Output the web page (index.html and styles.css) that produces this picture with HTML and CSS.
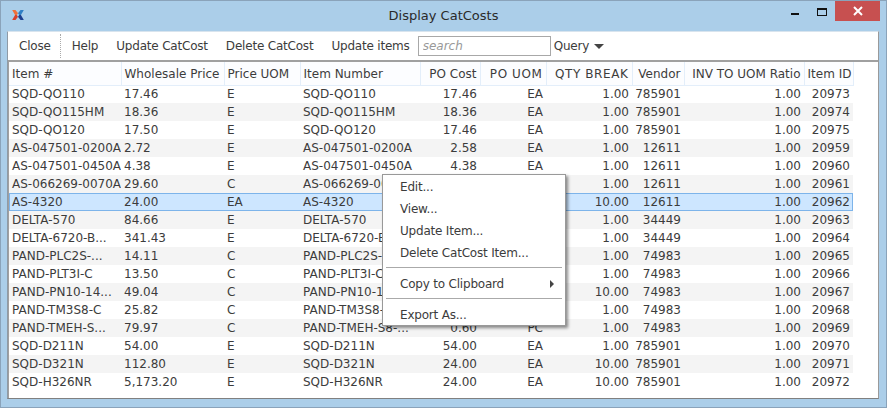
FILE: index.html
```html
<!DOCTYPE html>
<html lang="en">

<head>
    <meta charset="UTF-8">
    <title>Display CatCosts</title>
    <link rel="stylesheet" href="styles.css">
</head>

<body>
    <div class="window">
        <div class="titlebar">
            <svg class="logo" width="12" height="10" viewBox="0 0 14 12">
                <path d="M0 0H4L7 4L5.5 6H3.5Z" fill="#f0703a" />
                <path d="M3.5 6H5.5L7 8L4 12H0Z" fill="#d8402c" />
                <path d="M14 0H10L7 4L8.5 6H10.5Z" fill="#2f7fc4" />
                <path d="M10.5 6H8.5L7 8L10 12H14Z" fill="#1d3f8f" />
            </svg>
            <div class="title">Display CatCosts</div>
            <div class="controls">
                <span class="min"></span>
                <span class="max"></span>
                <span class="close">
                    <svg width="10" height="10" viewBox="0 0 10 10">
                        <path d="M1 1L9 9M9 1L1 9" stroke="#fff" stroke-width="2" />
                    </svg>
                </span>
            </div>
        </div>

        <div class="panel">
            <div class="toolbar">
                <a class="tool">Close</a>
                <span class="sep"></span>
                <a class="tool">Help</a>
                <a class="tool">Update CatCost</a>
                <a class="tool">Delete CatCost</a>
                <a class="tool">Update items</a>
                <input class="search" type="text" placeholder="search">
                <a class="query">Query<span class="caret"></span></a>
            </div>

            <div class="grid">
                <table>
                    <colgroup>
                        <col class="c1"><col class="c2"><col class="c3"><col class="c4"><col class="c5">
                        <col class="c6"><col class="c7"><col class="c8"><col class="c9"><col class="c10">
                    </colgroup>
                    <thead>
                        <tr>
                            <th>Item #</th>
                            <th>Wholesale Price</th>
                            <th>Price UOM</th>
                            <th>Item Number</th>
                            <th class="num">PO Cost</th>
                            <th class="num caps">PO UOM</th>
                            <th class="num caps">QTY BREAK</th>
                            <th class="num">Vendor</th>
                            <th class="num">INV TO UOM Ratio</th>
                            <th class="num">Item ID</th>
                        </tr>
                    </thead>
                    <tbody>
                        <tr><td>SQD-QO110</td><td>17.46</td><td>E</td><td>SQD-QO110</td><td class="num">17.46</td><td class="num">EA</td><td class="num">1.00</td><td class="num">785901</td><td class="num">1.00</td><td class="num">20973</td></tr>
                        <tr><td>SQD-QO115HM</td><td>18.36</td><td>E</td><td>SQD-QO115HM</td><td class="num">18.36</td><td class="num">EA</td><td class="num">1.00</td><td class="num">785901</td><td class="num">1.00</td><td class="num">20974</td></tr>
                        <tr><td>SQD-QO120</td><td>17.50</td><td>E</td><td>SQD-QO120</td><td class="num">17.46</td><td class="num">EA</td><td class="num">1.00</td><td class="num">785901</td><td class="num">1.00</td><td class="num">20975</td></tr>
                        <tr><td>AS-047501-0200A</td><td>2.72</td><td>E</td><td>AS-047501-0200A</td><td class="num">2.58</td><td class="num">EA</td><td class="num">1.00</td><td class="num">12611</td><td class="num">1.00</td><td class="num">20959</td></tr>
                        <tr><td>AS-047501-0450A</td><td>4.38</td><td>E</td><td>AS-047501-0450A</td><td class="num">4.38</td><td class="num">EA</td><td class="num">1.00</td><td class="num">12611</td><td class="num">1.00</td><td class="num">20960</td></tr>
                        <tr><td>AS-066269-0070A</td><td>29.60</td><td>C</td><td>AS-066269-0070A</td><td class="num"></td><td class="num"></td><td class="num">1.00</td><td class="num">12611</td><td class="num">1.00</td><td class="num">20961</td></tr>
                        <tr class="selected"><td>AS-4320</td><td>24.00</td><td>EA</td><td>AS-4320</td><td class="num"></td><td class="num"></td><td class="num">10.00</td><td class="num">12611</td><td class="num">1.00</td><td class="num">20962</td></tr>
                        <tr><td>DELTA-570</td><td>84.66</td><td>E</td><td>DELTA-570</td><td class="num"></td><td class="num"></td><td class="num">1.00</td><td class="num">34449</td><td class="num">1.00</td><td class="num">20963</td></tr>
                        <tr><td>DELTA-6720-B...</td><td>341.43</td><td>E</td><td>DELTA-6720-B...</td><td class="num"></td><td class="num"></td><td class="num">1.00</td><td class="num">34449</td><td class="num">1.00</td><td class="num">20964</td></tr>
                        <tr><td>PAND-PLC2S-...</td><td>14.11</td><td>C</td><td>PAND-PLC2S-...</td><td class="num"></td><td class="num"></td><td class="num">1.00</td><td class="num">74983</td><td class="num">1.00</td><td class="num">20965</td></tr>
                        <tr><td>PAND-PLT3I-C</td><td>13.50</td><td>C</td><td>PAND-PLT3I-C</td><td class="num"></td><td class="num"></td><td class="num">1.00</td><td class="num">74983</td><td class="num">1.00</td><td class="num">20966</td></tr>
                        <tr><td>PAND-PN10-14...</td><td>49.04</td><td>C</td><td>PAND-PN10-14...</td><td class="num"></td><td class="num"></td><td class="num">10.00</td><td class="num">74983</td><td class="num">1.00</td><td class="num">20967</td></tr>
                        <tr><td>PAND-TM3S8-C</td><td>25.82</td><td>C</td><td>PAND-TM3S8-C</td><td class="num"></td><td class="num"></td><td class="num">1.00</td><td class="num">74983</td><td class="num">1.00</td><td class="num">20968</td></tr>
                        <tr><td>PAND-TMEH-S...</td><td>79.97</td><td>C</td><td>PAND-TMEH-S8-...</td><td class="num">0.60</td><td class="num">PC</td><td class="num">1.00</td><td class="num">74983</td><td class="num">1.00</td><td class="num">20969</td></tr>
                        <tr><td>SQD-D211N</td><td>54.00</td><td>E</td><td>SQD-D211N</td><td class="num">54.00</td><td class="num">EA</td><td class="num">1.00</td><td class="num">785901</td><td class="num">1.00</td><td class="num">20970</td></tr>
                        <tr><td>SQD-D321N</td><td>112.80</td><td>E</td><td>SQD-D321N</td><td class="num">24.00</td><td class="num">EA</td><td class="num">10.00</td><td class="num">785901</td><td class="num">1.00</td><td class="num">20971</td></tr>
                        <tr><td>SQD-H326NR</td><td>5,173.20</td><td>E</td><td>SQD-H326NR</td><td class="num">24.00</td><td class="num">EA</td><td class="num">10.00</td><td class="num">785901</td><td class="num">1.00</td><td class="num">20972</td></tr>
                    </tbody>
                </table>
            </div>
        </div>

        <ul class="menu">
            <li>Edit...</li>
            <li>View...</li>
            <li>Update Item...</li>
            <li>Delete CatCost Item...</li>
            <li class="divider"></li>
            <li class="submenu">Copy to Clipboard<span class="arrow"></span></li>
            <li class="divider"></li>
            <li>Export As...</li>
        </ul>
    </div>
</body>

</html>
```

FILE: styles.css
```css
body {
    margin: 0;
    font-family: "DejaVu Sans", sans-serif;
    font-size: 12px;
    color: #3c3c3c;
}

.window {
    position: relative;
    box-sizing: border-box;
    width: 887px;
    height: 408px;
    background-color: #abcee9;
    border: 1px solid #8aa3ba;
    display: flex;
    flex-direction: column;
}

.titlebar {
    height: 30px;
    flex-shrink: 0;
    display: grid;
    grid-template-columns: 1fr auto 1fr;
    align-items: start;
}

.logo {
    margin: 9px 0 0 11px;
}

.title {
    margin-top: 7px;
    font-size: 13px;
    color: #2a2a2a;
}

.controls {
    justify-self: end;
    display: flex;
    margin-right: 6px;
}

.min {
    width: 8px;
    height: 2px;
    margin: 12px 18px 0 0;
    background-color: #111;
}

.max {
    box-sizing: border-box;
    width: 10px;
    height: 8px;
    margin: 7px 8px 0 0;
    border: 1px solid #111;
    border-top-width: 2px;
}

.close {
    width: 45px;
    height: 20px;
    background-color: #c75050;
    display: flex;
    align-items: center;
    justify-content: center;
}

.panel {
    flex: 1;
    margin: 0 7px 8px 6px;
    background-color: #fff;
    border: 1px solid #a0a0a0;
    border-top-color: #d8e4ee;
    border-left-color: #8f9aa5;
    border-right-color: #9a9a9a;
    border-bottom-color: #808080;
    display: flex;
    flex-direction: column;
    min-height: 0;
}

.toolbar {
    height: 28px;
    flex-shrink: 0;
    display: flex;
    align-items: center;
    padding-left: 2px;
    letter-spacing: -0.2px;
}

.tool {
    padding: 0 9px;
    white-space: nowrap;
}

.sep {
    height: 24px;
    margin-right: 2px;
    border-left: 1px dotted #aaa;
}

.search {
    box-sizing: border-box;
    width: 133px;
    height: 20px;
    margin: 0 3px 0 -1px;
    padding: 0 4px;
    border: 1px solid #a8a8a8;
    font-family: inherit;
    font-size: 12px;
}

.search::placeholder {
    color: #999;
    font-style: italic;
}

.query {
    display: flex;
    align-items: center;
}

.caret {
    width: 0;
    height: 0;
    margin-left: 5px;
    border-left: 5px solid transparent;
    border-right: 5px solid transparent;
    border-top: 5px solid #444;
}

.grid {
    flex: 1;
    border-top: 2px solid #a0a0a0;
    border-left: 1px solid #a0a0a0;
    overflow: hidden;
}

table {
    border-collapse: collapse;
    table-layout: fixed;
    width: 844px;
}

.c1 { width: 112px; }
.c2 { width: 103px; }
.c3 { width: 76px; }
.c4 { width: 120px; }
.c5 { width: 60px; }
.c6 { width: 66px; }
.c7 { width: 86px; }
.c8 { width: 52px; }
.c9 { width: 120px; }
.c10 { width: 49px; }

th,
td {
    height: 18px;
    padding: 0 3px;
    text-align: left;
    white-space: nowrap;
    overflow: hidden;
    font-weight: normal;
    box-sizing: border-box;
}

th {
    height: 23px;
    padding-top: 2px;
    background-color: #fcfdff;
    border-right: 1px solid #e3eefa;
    border-bottom: 1px solid #e3eefa;
}

th.caps {
    letter-spacing: 0.6px;
}

th.num,
td.num {
    text-align: right;
}

tbody tr:nth-child(even) {
    background-color: #f4f4f4;
}

tbody tr.selected {
    background-color: #cde6ff;
    outline: 1px solid #7db4ea;
    outline-offset: -1px;
}

.menu {
    position: absolute;
    left: 381px;
    top: 173px;
    width: 184px;
    height: 152px;
    box-sizing: border-box;
    margin: 0;
    padding: 1px 0 0;
    list-style: none;
    background-color: #fff;
    border: 1px solid #999;
    box-shadow: 2px 2px 3px rgba(0, 0, 0, 0.45);
    letter-spacing: -0.2px;
}

.menu li {
    position: relative;
    height: 22px;
    line-height: 22px;
    padding-left: 17px;
}

.menu .divider {
    height: 1px;
    margin: 3px 3px 5px;
    padding: 0;
    background-color: #aaa;
}

.arrow {
    position: absolute;
    right: 11px;
    top: 7px;
    width: 0;
    height: 0;
    border-top: 4px solid transparent;
    border-bottom: 4px solid transparent;
    border-left: 4px solid #444;
}
```
